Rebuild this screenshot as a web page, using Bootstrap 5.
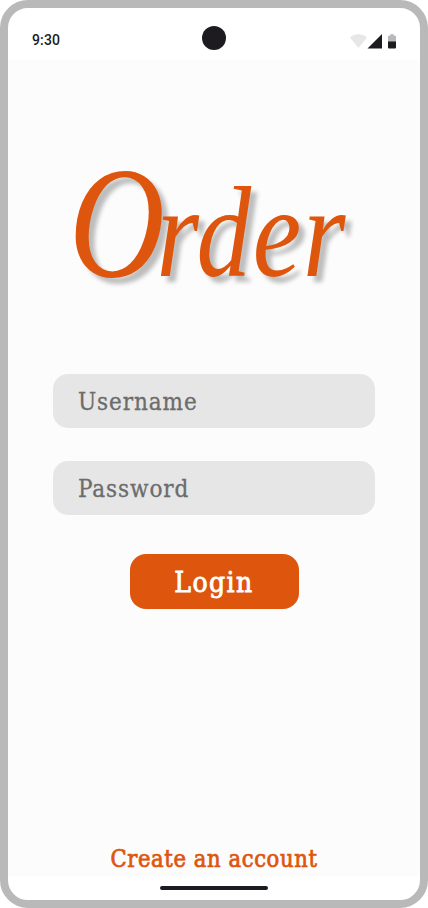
<!DOCTYPE html>
<html lang="en">
<head>
<meta charset="utf-8">
<meta name="viewport" content="width=device-width, initial-scale=1">
<title>Order</title>
<link href="https://cdn.jsdelivr.net/npm/bootstrap@5.3.0/dist/css/bootstrap.min.css" rel="stylesheet">
<style>
:root { --brand: #de560d; --ink: #1d1b20; --slab: "Roboto Slab", "DejaVu Serif Condensed", "DejaVu Serif", serif; }
body { background: #fff; }
.phone { width: 428px; height: 908px; border: 8px solid #b9b9b9; border-radius: 28px; background: #fff; }
.status { height: 52px; padding: 10px 24px 0; font: 500 14px/20px Roboto, sans-serif; letter-spacing: .14px; color: var(--ink); }
.camera { width: 24px; height: 24px; left: 194px; top: 18px; background: var(--ink); }
.screen { background: #fcfcfc; height: 816px; }
.brand { height: 314px; padding: 102px 0 0 61px; }
.brand h1 { font: italic 130px/140px "Liberation Serif", serif; letter-spacing: 2px; color: var(--brand); text-shadow: 7px 6px 5px rgba(0,0,0,.25); transform: scaleX(.84); transform-origin: 0 0; white-space: nowrap; }
.brand h1 span { font-size: 158px; line-height: 1px; letter-spacing: -10px; }
.fields { width: 322px; gap: 33px; }
.fields .form-control { height: 54px; padding: 2px 25px 0; border-radius: 15px; background: #e6e6e6; font: 24px/52px var(--slab); font-stretch: condensed; letter-spacing: .9px; }
.fields .form-control::placeholder { color: #6c6c6c; opacity: 1; -webkit-text-stroke: .3px #6c6c6c; }
.login { width: 169px; height: 55px; margin-top: 39px; border-radius: 16px; background: var(--brand); color: #fff; font: 28px/57px var(--slab); font-stretch: condensed; letter-spacing: 1.4px; -webkit-text-stroke: .8px #fff; }
.create { color: var(--brand); font: 23.5px/34px var(--slab); font-stretch: condensed; letter-spacing: .6px; -webkit-text-stroke: .7px var(--brand); white-space: nowrap; }
.homebar { height: 24px; }
.homebar div { width: 108px; height: 4px; background: var(--ink); }
</style>
<script src="https://cdn.jsdelivr.net/npm/bootstrap@5.3.0/dist/js/bootstrap.bundle.min.js"></script>
</head>
<body>
<main class="phone position-relative overflow-hidden d-flex flex-column">
  <header class="status d-flex justify-content-between">
    <span class="pt-1 mt-2">9:30</span>
    <svg class="mt-3" width="46" height="16" viewBox="0 0 46 16" aria-hidden="true">
      <path d="M0 3.5C4.5-.7 12.500-.7 17 3.500L8.500 14Z" fill="#e7e7e8"/>
      <path d="M32 0V14.500H17.500Z" fill="#1d1b20"/>
      <path d="M38 8V2.500q0-1 1-1h1.500V0h3v1.500H45q1 0 1 1V8Z" fill="#b9b9bb"/>
      <path d="M38 7.500h8V13.500q0 1-1 1h-6q-1 0-1-1Z" fill="#1d1b20"/>
    </svg>
  </header>
  <div class="camera rounded-circle position-absolute"></div>
  <section class="screen d-flex flex-column align-items-center">
    <div class="brand w-100"><h1 class="m-0"><span>O</span>rder</h1></div>
    <form class="d-flex flex-column align-items-center">
      <div class="fields d-flex flex-column">
        <input class="form-control border-0" type="text" placeholder="Username" aria-label="Username">
        <input class="form-control border-0" type="password" placeholder="Password" aria-label="Password">
      </div>
      <button class="login btn border-0 p-0" type="button">Login</button>
    </form>
    <a class="create mt-auto text-decoration-none" href="#">Create an account</a>
  </section>
  <footer class="homebar d-flex align-items-center justify-content-center"><div class="rounded-pill"></div></footer>
</main>
</body>
</html>
